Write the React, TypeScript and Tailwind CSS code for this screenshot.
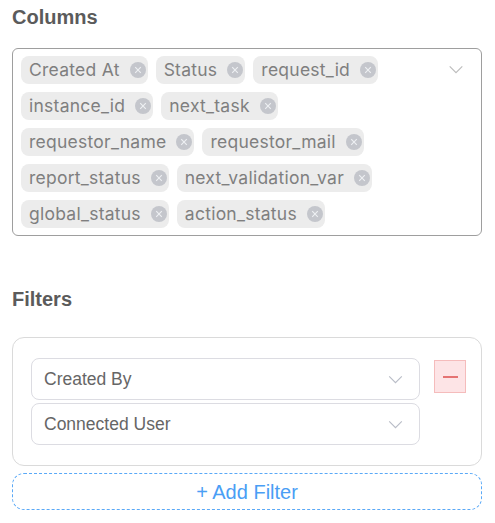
import React from "react";

const columns = [
  ["Created At", "Status", "request_id"],
  ["instance_id", "next_task"],
  ["requestor_name", "requestor_mail"],
  ["report_status", "next_validation_var"],
  ["global_status", "action_status"],
];

function Chevron({ className }: { className?: string }) {
  return (
    <svg viewBox="0 0 16 10" className={className} fill="none" stroke="currentColor" strokeWidth="1.3">
      <path d="M1 1.5 L8 8.5 L15 1.5" />
    </svg>
  );
}

function Chip({ label }: { label: string }) {
  return (
    <span className="flex h-[28px] items-center rounded-lg bg-[#ececec] pl-2 pr-[2px] text-[17.5px] tracking-[0.25px] text-[#7f7f7f]">
      <span className="leading-none">{label}</span>
      <span className="ml-[10px] flex h-4 w-4 items-center justify-center rounded-full bg-[#c4c6cc]">
        <svg viewBox="0 0 10 10" className="h-[8px] w-[8px]" stroke="#eef0f3" strokeWidth="1.4">
          <path d="M1.5 1.5 L8.5 8.5 M8.5 1.5 L1.5 8.5" />
        </svg>
      </span>
    </span>
  );
}

function Select({ value }: { value: string }) {
  return (
    <div className="flex h-[42px] items-center justify-between rounded-lg border border-[#dcdce2] pl-3 pr-4">
      <span className="text-[17.5px] text-[#666]" style={{ fontFamily: '"Liberation Sans", Arial, sans-serif' }}>
        {value}
      </span>
      <Chevron className="h-[9px] w-[15px] text-[#b9bdc7]" />
    </div>
  );
}

export default function App() {
  return (
    <div className="min-h-[523px] w-[495px] bg-white px-3" style={{ fontFamily: "Inter, sans-serif" }}>
      <h2
        className="pt-[5px] text-[20px] font-bold leading-[24px] text-[#5b5b5b]"
        style={{ fontFamily: '"Liberation Sans", Arial, sans-serif' }}
      >
        Columns
      </h2>
      <div className="mt-[19px] flex w-[470px] items-start rounded-md border border-[#9e9e9e] px-2 py-[7px]">
        <div className="flex flex-1 flex-col gap-2">
          {columns.map((row, i) => (
            <div key={i} className="flex gap-2">
              {row.map((c) => (
                <Chip key={c} label={c} />
              ))}
            </div>
          ))}
        </div>
        <Chevron className="mr-[9px] mt-[9px] h-[9px] w-[16px] text-[#bdbdbd]" />
      </div>

      <h2
        className="mt-[51px] text-[20px] font-bold leading-[24px] text-[#5b5b5b]"
        style={{ fontFamily: '"Liberation Sans", Arial, sans-serif' }}
      >
        Filters
      </h2>
      <div className="mt-[26px] flex w-[470px] items-start rounded-xl border border-[#dadada] pb-[20px] pt-[20px] pl-[18px] pr-[15px]">
        <div className="flex w-[389px] flex-col gap-[3px]">
          <Select value="Created By" />
          <Select value="Connected User" />
        </div>
        <button className="ml-[14px] mt-[2px] flex h-[33px] w-[32px] items-center justify-center border border-[#f5bcbc] bg-[#fde4e6]">
          <span className="block h-[2px] w-[15px] bg-[#e57373]" />
        </button>
      </div>
      <button
        className="mt-[7px] flex h-[37px] w-[470px] items-center justify-center rounded-xl border border-dashed border-[#5aa9f7] text-[20px] text-[#4a9ef5]"
        style={{ fontFamily: '"Liberation Sans", Arial, sans-serif' }}
      >
        + Add Filter
      </button>
    </div>
  );
}
